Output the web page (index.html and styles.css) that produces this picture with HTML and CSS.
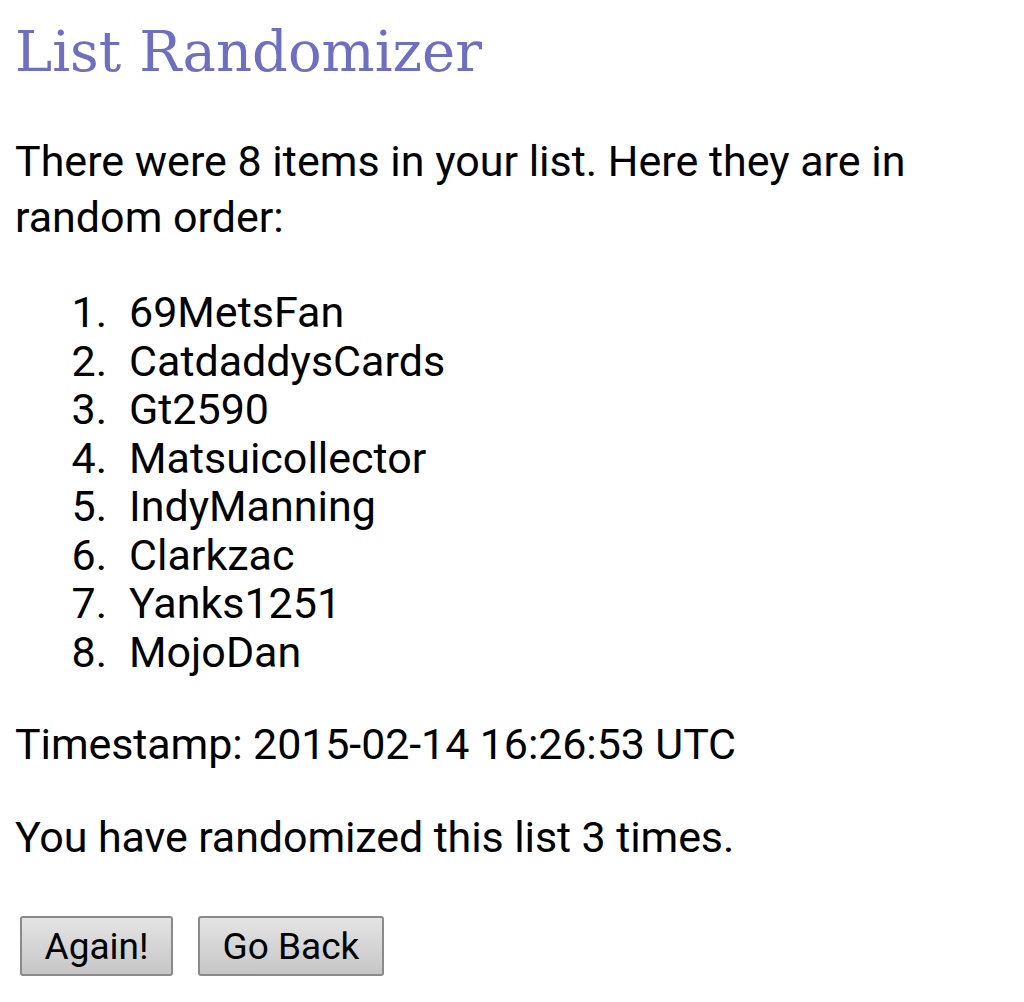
FILE: index.html
```html
<!DOCTYPE html>
<html>
<head>
<meta charset="utf-8">
<link rel="stylesheet" href="styles.css">
</head>
<body>
<h1 class="title">List Randomizer</h1>
<p class="intro">There were 8 items in your list. Here they are in random order:</p>
<ol class="items">
<li>69MetsFan</li>
<li>CatdaddysCards</li>
<li>Gt2590</li>
<li>Matsuicollector</li>
<li>IndyManning</li>
<li>Clarkzac</li>
<li>Yanks1251</li>
<li>MojoDan</li>
</ol>
<p class="info">Timestamp: 2015-02-14 16:26:53 UTC</p>
<p class="info info-last">You have randomized this list 3 times.</p>
<div class="actions">
<button class="btn">Again!</button>
<button class="btn">Go Back</button>
</div>
</body>
</html>
```
FILE: styles.css
```css
html, body {
  margin: 0;
  background: #ffffff;
}
body {
  padding: 0 15px;
  font-family: Roboto, "Liberation Sans", sans-serif;
  color: #000;
}
.title {
  margin: 17px 0 0;
  font-family: "DejaVu Serif", serif;
  font-weight: normal;
  font-size: 56px;
  line-height: 70px;
  color: #6f6fc2;
}
.intro {
  margin: 46px 0 0;
  width: 960px;
  font-size: 43px;
  line-height: 56px;
}
.items {
  margin: 43px 0 0;
  padding: 0;
  list-style: none;
  counter-reset: item;
  font-size: 43px;
  line-height: 48.5px;
}
.items li {
  display: flex;
  counter-increment: item;
}
.items li::before {
  content: counter(item) ".";
  width: 92px;
  margin-right: 22px;
  text-align: right;
}
.info {
  margin: 40px 0 0;
  font-size: 43px;
  line-height: 56px;
  letter-spacing: -0.1px;
}
.info-last {
  margin-top: 37px;
}
.actions {
  display: flex;
  gap: 25px;
  margin: 51px 0 0 5px;
}
.btn {
  font-family: Roboto, "Liberation Sans", sans-serif;
  font-size: 37px;
  height: 60px;
  padding: 0 22.5px;
  border: 2px solid #8a8a8a;
  border-radius: 3px;
  background: linear-gradient(#e4e4e4, #c6c6c6);
  color: #000;
}
```
